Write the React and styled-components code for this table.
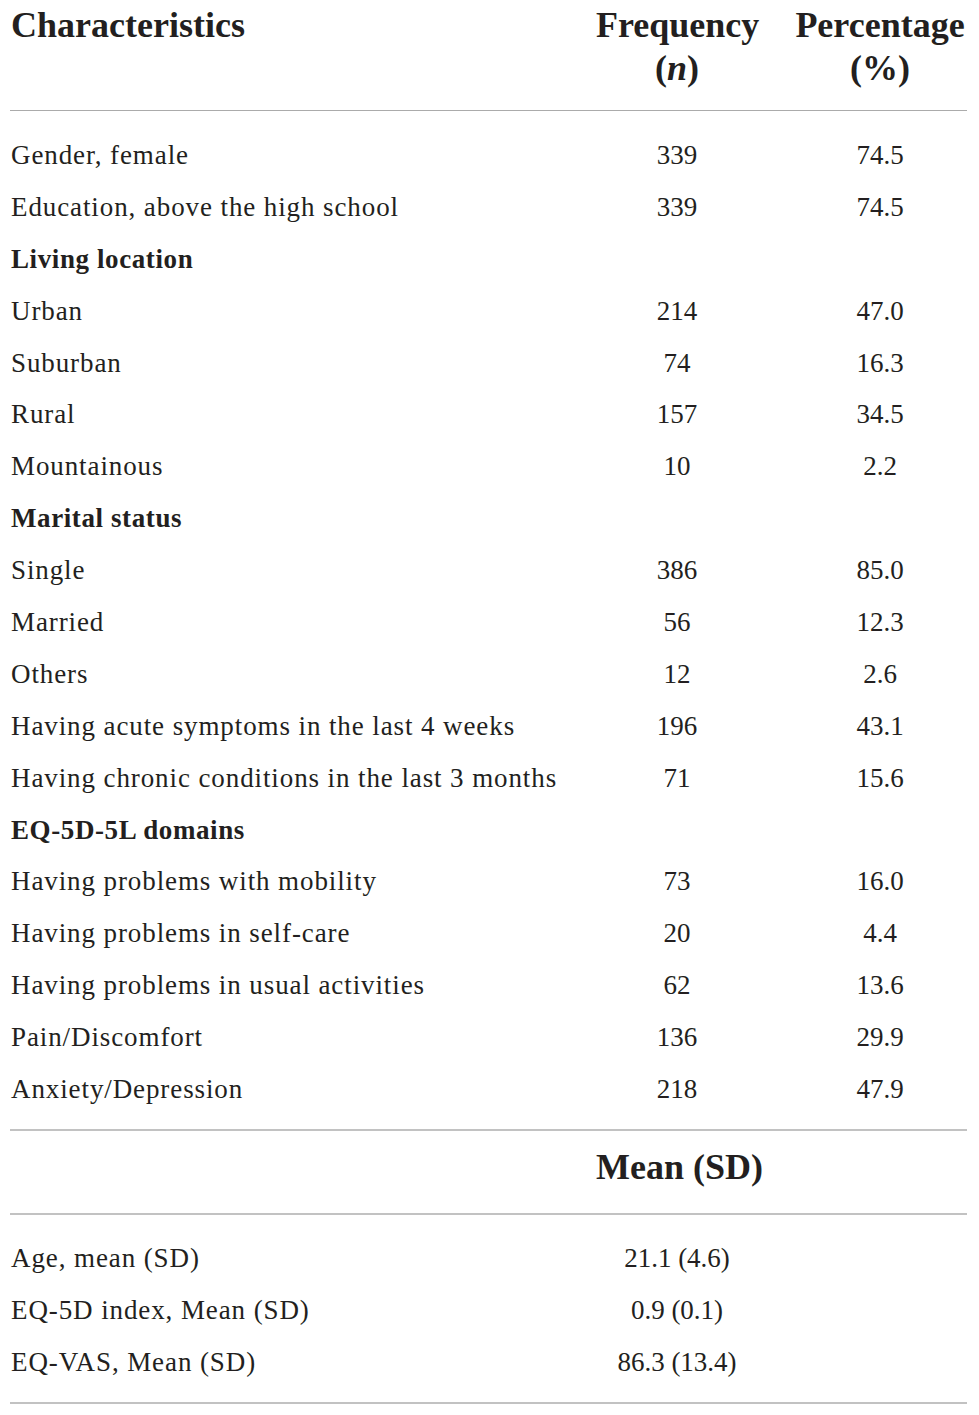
import React from "react";
import styled, { createGlobalStyle } from "styled-components";

const Global = createGlobalStyle`
  html, body { margin: 0; padding: 0; background: #ffffff; }
  body { font-family: "Liberation Serif", "Times New Roman", serif; color: #231f20; }
`;

const Page = styled.div`
  width: 979px;
  padding: 2px 0 0 10px;
  box-sizing: border-box;
`;

const Table = styled.div`
  width: 957px;
`;

const Grid = styled.div`
  display: grid;
  grid-template-columns: 1fr 162px 174px;
  column-gap: 35px;
  align-items: start;
`;

const HeadRow = styled(Grid)`
  font-weight: 700;
  font-size: 36px;
  line-height: 43px;
  padding: 2px 0 20px;
  border-bottom: 1px solid #ababab;
`;

const HeadLabel = styled.div`
  padding-left: 1px;
`;

const HeadCell = styled.div`
  text-align: center;
  white-space: nowrap;
`;

const Body = styled.div`
  padding: 19px 0 13px;
  border-bottom: 2px solid #c2c2c2;
`;

const Row = styled(Grid)`
  height: 51.9px;
  font-size: 27px;
  line-height: 51.9px;
  font-weight: ${(p) => (p.$bold ? 700 : 400)};
`;

const Label = styled.div`
  padding-left: 1px;
  white-space: nowrap;
  letter-spacing: ${(p) => (p.$bold ? "0.6px" : "0.9px")};
`;

const Num = styled.div`
  text-align: center;
  white-space: nowrap;
`;

const MeanHead = styled(Grid)`
  font-weight: 700;
  font-size: 36px;
  line-height: 43px;
  padding: 15px 0 24px;
  border-bottom: 2px solid #c2c2c2;
`;

const Tail = styled.div`
  padding: 18px 0 13px;
  border-bottom: 2px solid #c2c2c2;
`;

const rows = [
  ["Gender, female", "339", "74.5"],
  ["Education, above the high school", "339", "74.5"],
  ["Living location", "", "", true],
  ["Urban", "214", "47.0"],
  ["Suburban", "74", "16.3"],
  ["Rural", "157", "34.5"],
  ["Mountainous", "10", "2.2"],
  ["Marital status", "", "", true],
  ["Single", "386", "85.0"],
  ["Married", "56", "12.3"],
  ["Others", "12", "2.6"],
  ["Having acute symptoms in the last 4 weeks", "196", "43.1"],
  ["Having chronic conditions in the last 3 months", "71", "15.6"],
  ["EQ-5D-5L domains", "", "", true],
  ["Having problems with mobility", "73", "16.0"],
  ["Having problems in self-care", "20", "4.4"],
  ["Having problems in usual activities", "62", "13.6"],
  ["Pain/Discomfort", "136", "29.9"],
  ["Anxiety/Depression", "218", "47.9"],
];

const means = [
  ["Age, mean (SD)", "21.1 (4.6)"],
  ["EQ-5D index, Mean (SD)", "0.9 (0.1)"],
  ["EQ-VAS, Mean (SD)", "86.3 (13.4)"],
];

export default function App() {
  return (
    <>
      <Global />
      <Page>
        <Table>
          <HeadRow>
            <HeadLabel>Characteristics</HeadLabel>
            <HeadCell>
              Frequency
              <br />
              (<i>n</i>)
            </HeadCell>
            <HeadCell>
              Percentage
              <br />
              (%)
            </HeadCell>
          </HeadRow>
          <Body>
            {rows.map(([l, n, p, b]) => (
              <Row key={l} $bold={b}>
                <Label $bold={b}>{l}</Label>
                <Num>{n}</Num>
                <Num>{p}</Num>
              </Row>
            ))}
          </Body>
          <MeanHead>
            <div />
            <HeadCell>Mean (SD)</HeadCell>
            <div />
          </MeanHead>
          <Tail>
            {means.map(([l, v]) => (
              <Row key={l}>
                <Label>{l}</Label>
                <Num>{v}</Num>
                <div />
              </Row>
            ))}
          </Tail>
        </Table>
      </Page>
    </>
  );
}
